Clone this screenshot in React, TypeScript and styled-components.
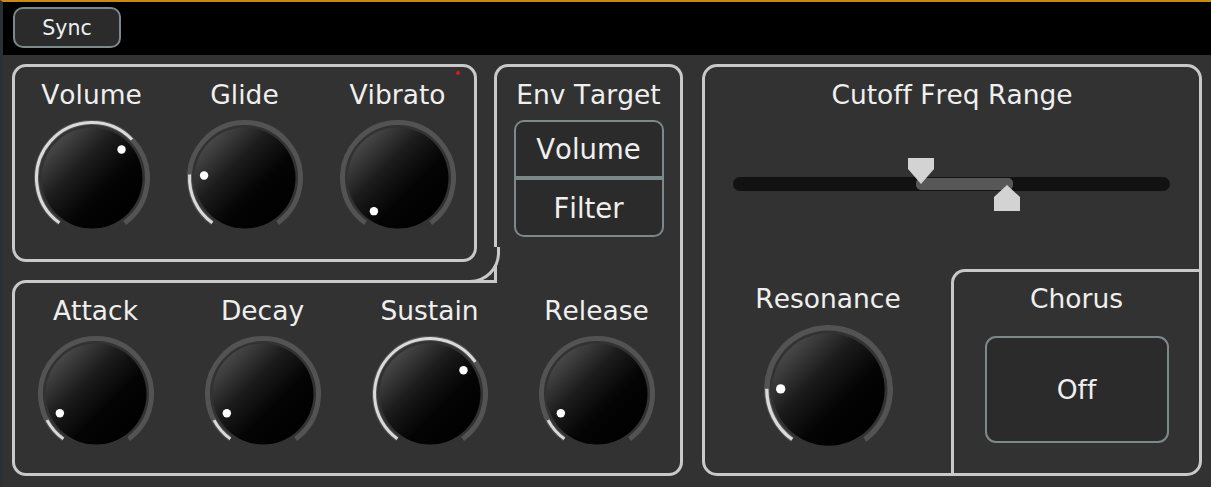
import React from 'react';
import styled, { createGlobalStyle } from 'styled-components';

const BG = '#323232';
const LINE = '#c9c9c9';
const BTN_BORDER = '#7c898b';
const BTN_BG = '#2b2b2b';
const TEXT = '#efefef';

const GlobalStyle = createGlobalStyle`
  html, body { margin: 0; padding: 0; background: ${BG}; }
  body {
    font-family: "DejaVu Sans", Verdana, sans-serif;
    color: ${TEXT};
    font-kerning: none;
    font-variant-ligatures: none;
    font-feature-settings: "kern" 0, "liga" 0;
  }
  * { box-sizing: border-box; }
`;

const Page = styled.div`
  width: 1211px;
  height: 487px;
  background: ${BG};
  border-top: 2px solid #c88a14;
  border-left: 3px solid #2b3034;
  display: flex;
  flex-direction: column;
  overflow: hidden;
`;

const TopBar = styled.div`
  height: 53px;
  flex: none;
  background: #000;
  display: flex;
  align-items: flex-start;
  padding: 5px 0 0 10px;
`;

const SyncButton = styled.button`
  width: 108px;
  height: 41px;
  border: 2px solid ${BTN_BORDER};
  border-radius: 10px;
  background: ${BTN_BG};
  color: ${TEXT};
  font-family: "DejaVu Sans", Verdana, sans-serif;
  font-size: 20.5px;
  font-kerning: none;
  padding: 0;
  display: flex;
  align-items: center;
  justify-content: center;
`;

const Main = styled.div`
  flex: 1;
  display: flex;
  gap: 19px;
  padding: 9px 9px 11px 9px;
`;

const LeftSection = styled.div`
  width: 671px;
  display: grid;
  grid-template-columns: 465px 189px;
  grid-template-rows: 198px 196px;
  column-gap: 17px;
  row-gap: 18px;
`;

const TopPanel = styled.div`
  grid-column: 1;
  grid-row: 1;
  position: relative;
  z-index: 2;
  border: 3px solid ${LINE};
  border-radius: 14px;
  padding-top: 13px;
`;

const RedDot = styled.span`
  position: absolute;
  top: 4px;
  right: 14px;
  width: 4px;
  height: 4px;
  border-radius: 50%;
  background: #e01818;
`;

const EnvPanel = styled.div`
  grid-column: 2;
  grid-row: 1;
  align-self: start;
  height: 219px;
  position: relative;
  z-index: 1;
  background: ${BG};
  border: 3px solid ${LINE};
  border-bottom: none;
  border-radius: 14px 14px 0 0;
  padding-top: 13px;
  display: flex;
  flex-direction: column;
  align-items: center;

  &::before {
    content: '';
    position: absolute;
    left: -33px;
    bottom: 0;
    width: 33px;
    height: 33px;
    background: ${BG};
    border-right: 3px solid ${LINE};
    border-bottom: 3px solid ${LINE};
    border-bottom-right-radius: 30px;
  }
`;

const AdsrPanel = styled.div`
  grid-column: 1 / span 2;
  grid-row: 2;
  border: 3px solid ${LINE};
  border-radius: 14px 0 14px 14px;
  padding-top: 13px;
`;

const KnobRow = styled.div<{ $cols: number; $col: number; $shift: number }>`
  display: grid;
  grid-template-columns: repeat(${p => p.$cols}, ${p => p.$col}px);
  margin-left: ${p => p.$shift}px;
`;

const KnobCell = styled.div<{ $pad?: number }>`
  display: flex;
  flex-direction: column;
  align-items: center;
  padding-top: ${p => p.$pad ?? 0}px;
`;

const Label = styled.div`
  font-size: 26.5px;
  line-height: 30px;
  height: 30px;
  white-space: nowrap;
  text-align: center;
`;

const KnobSvg = styled.svg<{ $gap: number }>`
  display: block;
  margin-top: ${p => p.$gap}px;
  flex: none;
`;

const ButtonGroup = styled.div`
  margin-top: 10px;
  width: 150px;
  display: flex;
  flex-direction: column;
`;

const EnvButton = styled.div<{ $pos: 'top' | 'bottom' }>`
  height: ${p => (p.$pos === 'top' ? 58 : 59)}px;
  border: 2px solid ${BTN_BORDER};
  background: ${BTN_BG};
  border-radius: ${p => (p.$pos === 'top' ? '10px 10px 0 0' : '0 0 10px 10px')};
  font-size: 27.5px;
  display: flex;
  align-items: center;
  justify-content: center;
`;

const RightPanel = styled.div`
  flex: 1;
  border: 3px solid ${LINE};
  border-radius: 15px;
  display: flex;
  flex-direction: column;
  overflow: hidden;
`;

const PanelTitle = styled(Label)`
  margin-top: 13px;
`;

const SliderArea = styled.div`
  flex: 1;
  padding: 48px 29px 0 28px;
`;

const Slider = styled.div`
  position: relative;
  height: 54px;
`;

const Track = styled.div`
  position: absolute;
  top: 19px;
  left: 0;
  right: 0;
  height: 14px;
  border-radius: 7px;
  background: #121212;
`;

const RangeFill = styled.div`
  position: absolute;
  top: 20px;
  height: 12px;
  border-radius: 5px;
  background: #575757;
`;

const Thumb = styled.svg<{ $top: number }>`
  position: absolute;
  top: ${p => p.$top}px;
  transform: translateX(-50%);
  display: block;
`;

const BottomRow = styled.div`
  height: 204px;
  flex: none;
  display: flex;
`;

const ResonanceCol = styled(KnobCell)`
  flex: 1;
`;

const ChorusPanel = styled.div`
  width: 248px;
  border-top: 3px solid ${LINE};
  border-left: 3px solid ${LINE};
  border-top-left-radius: 14px;
  padding-top: 12px;
  display: flex;
  flex-direction: column;
  align-items: center;
`;

const ChorusButton = styled.div`
  margin-top: 22px;
  width: 184px;
  height: 107px;
  border: 2px solid ${BTN_BORDER};
  border-radius: 11px;
  background: ${BTN_BG};
  font-size: 26.5px;
  display: flex;
  align-items: center;
  justify-content: center;
`;

const START = 216;
const SWEEP = 288;

function polar(r: number, deg: number): [number, number] {
  const a = (deg * Math.PI) / 180;
  return [58 + r * Math.sin(a), 58 - r * Math.cos(a)];
}

function arc(r: number, a0: number, a1: number): string {
  const [x0, y0] = polar(r, a0);
  const [x1, y1] = polar(r, a1);
  const large = a1 - a0 > 180 ? 1 : 0;
  return `M ${x0.toFixed(2)} ${y0.toFixed(2)} A ${r} ${r} 0 ${large} 1 ${x1.toFixed(2)} ${y1.toFixed(2)}`;
}

type KnobProps = { id: string; value: number; size?: number; gap?: number; dotR?: number };

function Knob({ id, value, size = 116, gap = 10, dotR = 41 }: KnobProps) {
  const angle = START + SWEEP * value;
  const [dx, dy] = polar(dotR, angle);
  const gid = `knob-grad-${id}`;
  return (
    <KnobSvg $gap={gap} width={size} height={size} viewBox="0 0 116 116">
      <defs>
        <linearGradient id={gid} x1="0.12" y1="0.12" x2="0.88" y2="0.88">
          <stop offset="0" stopColor="#4c4c4c" />
          <stop offset="0.35" stopColor="#1c1c1c" />
          <stop offset="0.65" stopColor="#040404" />
          <stop offset="1" stopColor="#000" />
        </linearGradient>
      </defs>
      <path d={arc(55.5, START, START + SWEEP)} fill="none" stroke="#535353" strokeWidth={5} />
      {value > 0.001 && (
        <path d={arc(55.5, START, angle)} fill="none" stroke="#dadada" strokeWidth={3} />
      )}
      <circle cx={58} cy={58} r={50.5} fill={`url(#${gid})`} />
      <circle cx={dx} cy={dy} r={4.2} fill="#ffffff" />
    </KnobSvg>
  );
}

const topKnobs = [
  { name: 'Volume', value: 0.66 },
  { name: 'Glide', value: 0.2 },
  { name: 'Vibrato', value: 0 },
];

const adsrKnobs = [
  { name: 'Attack', value: 0.09 },
  { name: 'Decay', value: 0.09 },
  { name: 'Sustain', value: 0.69 },
  { name: 'Release', value: 0.09 },
];

const rangeMin = 43.0;
const rangeMax = 62.8;

export default function App() {
  return (
    <>
      <GlobalStyle />
      <Page>
        <TopBar>
          <SyncButton>Sync</SyncButton>
        </TopBar>
        <Main>
          <LeftSection>
            <TopPanel>
              <RedDot />
              <KnobRow $cols={3} $col={153} $shift={0}>
                {topKnobs.map(k => (
                  <KnobCell key={k.name}>
                    <Label>{k.name}</Label>
                    <Knob id={k.name} value={k.value} />
                  </KnobCell>
                ))}
              </KnobRow>
            </TopPanel>
            <EnvPanel>
              <Label>Env Target</Label>
              <ButtonGroup>
                <EnvButton $pos="top">Volume</EnvButton>
                <EnvButton $pos="bottom">Filter</EnvButton>
              </ButtonGroup>
            </EnvPanel>
            <AdsrPanel>
              <KnobRow $cols={4} $col={167} $shift={-3}>
                {adsrKnobs.map(k => (
                  <KnobCell key={k.name}>
                    <Label>{k.name}</Label>
                    <Knob id={k.name} value={k.value} />
                  </KnobCell>
                ))}
              </KnobRow>
            </AdsrPanel>
          </LeftSection>
          <RightPanel>
            <PanelTitle>Cutoff Freq Range</PanelTitle>
            <SliderArea>
              <Slider>
                <Track />
                <RangeFill style={{ left: `${rangeMin - 1.2}%`, width: `${rangeMax - rangeMin + 2.5}%` }} />
                <Thumb $top={0} width={26} height={26} viewBox="0 0 26 26" style={{ left: `${rangeMin}%` }}>
                  <polygon points="0,0 26,0 26,11 13,26 0,11" fill="#d3d3d3" />
                </Thumb>
                <Thumb $top={27} width={26} height={26} viewBox="0 0 26 26" style={{ left: `${rangeMax}%` }}>
                  <polygon points="13,0 26,12 26,26 0,26 0,12" fill="#d3d3d3" />
                </Thumb>
              </Slider>
            </SliderArea>
            <BottomRow>
              <ResonanceCol $pad={15}>
                <Label>Resonance</Label>
                <Knob id="Resonance" value={0.19} size={129} gap={11} dotR={43} />
              </ResonanceCol>
              <ChorusPanel>
                <Label>Chorus</Label>
                <ChorusButton>Off</ChorusButton>
              </ChorusPanel>
            </BottomRow>
          </RightPanel>
        </Main>
      </Page>
    </>
  );
}
